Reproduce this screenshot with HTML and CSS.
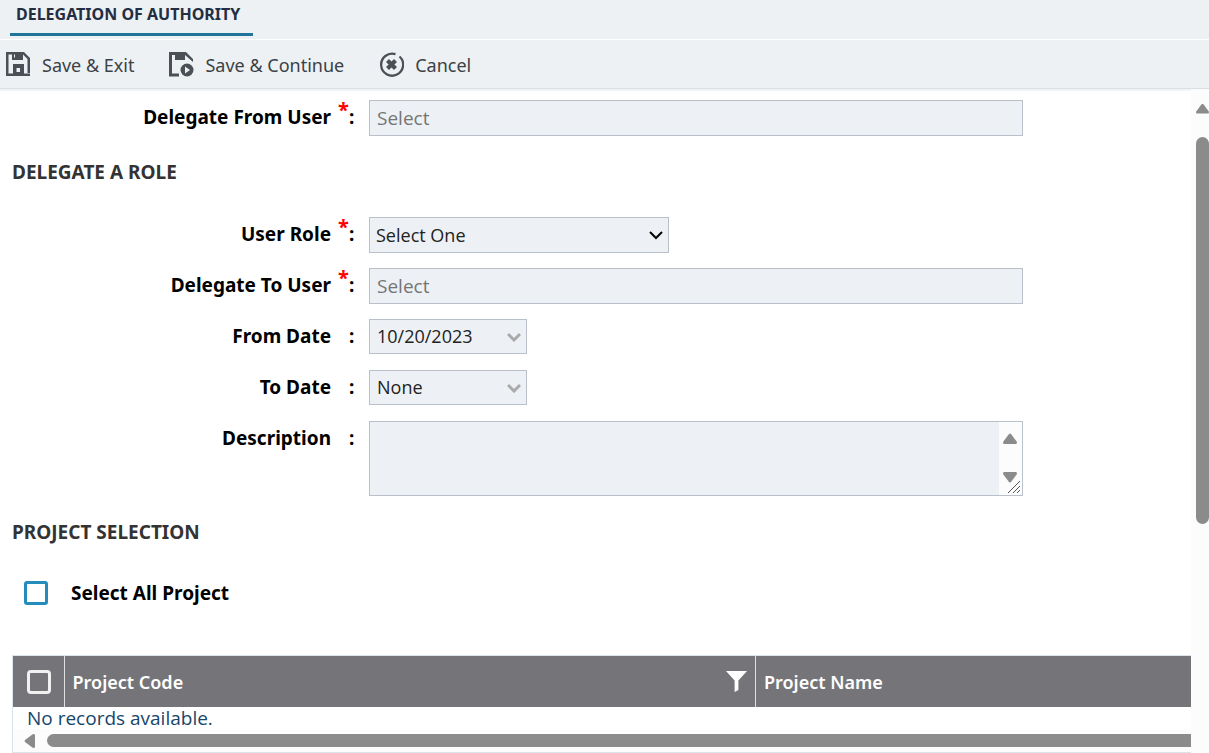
FILE: index.html
```html
<!DOCTYPE html>
<html lang="en">
<head>
<meta charset="utf-8">
<meta name="viewport" content="width=device-width, initial-scale=1">
<title>Delegation of Authority</title>
<link rel="stylesheet" href="styles.css">
</head>
<body>
<header class="page-header"><h1 class="page-title">DELEGATION OF AUTHORITY</h1></header>
<nav class="toolbar" aria-label="Actions">
  <button class="tool" type="button">
    <svg class="tool-icon" viewBox="0 0 25 25" aria-hidden="true"><path fill="#4b5056" d="M0 0H18L24 6V21H21.500V7L17 2.500V8H6V2.500H2.500V21.500H7V12H18V21.500H24V24H0Z"/><path fill="#edf1f4" d="M8 2.500h1v3H8zM10.500 16h3.500v4h-3.500z"/></svg>
    <span>Save &amp; Exit</span>
  </button>
  <button class="tool" type="button">
    <svg class="tool-icon" viewBox="0 0 25 25" aria-hidden="true"><path fill="#4b5056" d="M0 0H17L24 7V10L16 3V8H6V3H3V21.500H10V24.500H0Z"/><circle cx="18" cy="18" r="6.500" fill="#4b5056"/><path d="M16 14.500v7l5-3.500z" fill="#edf1f4"/></svg>
    <span>Save &amp; Continue</span>
  </button>
  <button class="tool" type="button">
    <svg class="tool-icon" viewBox="0 0 25 25" aria-hidden="true"><path d="M16.500 2.200A11 11 0 1 0 20.500 4.500" fill="none" stroke="#4b5056" stroke-width="2.300"/><path d="M8.500 8.500l8 8M16.500 8.500l-8 8" stroke="#4b5056" stroke-width="4.200"/></svg>
    <span>Cancel</span>
  </button>
</nav>
<div class="workspace">
  <main class="content">
    <form class="form">
      <div class="row">
        <label class="label" for="from-user">Delegate From User</label><span class="mark"><span class="star">*</span>:</span>
        <input class="field" id="from-user" type="text" placeholder="Select">
      </div>
      <h2 class="section section-role">DELEGATE A ROLE</h2>
      <div class="row">
        <label class="label" for="role">User Role</label><span class="mark"><span class="star">*</span>:</span>
        <div class="picker picker-role"><select class="field" id="role"><option>Select One</option></select>
        <svg class="chevron" viewBox="0 0 14 10" aria-hidden="true"><path d="M1 2l6 6 6-6"/></svg></div>
      </div>
      <div class="row">
        <label class="label" for="to-user">Delegate To User</label><span class="mark"><span class="star">*</span>:</span>
        <input class="field" id="to-user" type="text" placeholder="Select">
      </div>
      <div class="row">
        <label class="label" for="from-date">From Date</label><span class="mark">:</span>
        <div class="picker picker-date"><select class="field" id="from-date"><option>10/20/2023</option></select>
        <svg class="chevron" viewBox="0 0 14 10" aria-hidden="true"><path d="M1 2l6 6 6-6"/></svg></div>
      </div>
      <div class="row">
        <label class="label" for="to-date">To Date</label><span class="mark">:</span>
        <div class="picker picker-date"><select class="field" id="to-date"><option>None</option></select>
        <svg class="chevron" viewBox="0 0 14 10" aria-hidden="true"><path d="M1 2l6 6 6-6"/></svg></div>
      </div>
      <div class="row">
        <label class="label" for="description">Description</label><span class="mark">:</span>
        <div class="area"><textarea class="field" id="description"></textarea>
          <div class="area-bar" aria-hidden="true">
            <svg class="arrow" viewBox="0 0 14 11"><path d="M6 1q1-1 2 0l6 8q0 2-1 2H1q-1 0-1-2z"/></svg>
            <svg class="arrow" viewBox="0 0 14 11"><path d="M6 10q1 1 2 0l6-8q0-2-1-2H1Q0 0 0 2z"/></svg>
            <svg class="grip" viewBox="0 0 14 14"><path d="M1 13L13 1M6 13l7-7M10 13l3-3"/></svg>
          </div>
        </div>
      </div>
      <h2 class="section section-project">PROJECT SELECTION</h2>
      <div class="check-row"><input class="check" id="all" type="checkbox"><label for="all">Select All Project</label></div>
    </form>
    <div class="grid-panel">
      <table class="grid">
        <colgroup><col class="col-check"><col class="col-code"><col></colgroup>
        <thead><tr>
          <th><input class="check check-light" type="checkbox" aria-label="Select all rows"></th>
          <th><div class="head-cell"><span>Project Code</span><button class="filter" type="button" aria-label="Filter project code"><svg viewBox="0 0 22 22" aria-hidden="true"><path d="M0 0H22L13 10V20L9 22V10Z"/></svg></button></div></th>
          <th>Project Name</th>
        </tr></thead>
        <tbody><tr><td colspan="3">No records available.</td></tr></tbody>
      </table>
      <div class="h-scroll" aria-hidden="true"><svg viewBox="0 0 11 14"><path d="M1 6Q0 7 1 8l8 6q2 0 2-1V1q0-1-2-1z"/></svg><div class="h-thumb"></div></div>
    </div>
  </main>
  <div class="v-scroll" aria-hidden="true"><svg viewBox="0 0 14 11"><path d="M6 1q1-1 2 0l6 8q0 2-1 2H1q-1 0-1-2z"/></svg><div class="v-thumb"></div></div>
</div>
</body>
</html>
```

FILE: styles.css
```css
* { box-sizing: border-box; }
body {
  margin: 0;
  min-height: 100vh;
  overflow: hidden;
  display: flex;
  flex-direction: column;
  background: #fff;
  color: #000;
  font: 18px/24px "Noto Sans", "Open Sans", sans-serif;
}
button, input, select, textarea { font: inherit; margin: 0; }
svg { display: block; }

.page-header {
  display: flex;
  padding: 0 10px 3px;
  background: #edf1f4;
  border-bottom: 1px solid #fff;
}
.page-title {
  margin: 0;
  padding: 2px 13px 7px 6px;
  border-bottom: 3px solid #21759b;
  color: #242e42;
  font-size: 16px;
  font-weight: 700;
  line-height: 24px;
}
.toolbar {
  display: flex;
  gap: 35px;
  padding: 12px 6px 11px;
  background: #edf1f4;
  border-bottom: 1px solid #d9dee2;
  box-shadow: 0 2px 0 #f1f4f6;
}
.tool {
  display: flex;
  align-items: center;
  gap: 11px;
  padding: 0;
  border: 0;
  background: none;
  color: #3c4146;
}
.tool-icon { width: 25px; height: 25px; }

.workspace { flex: 1; display: flex; }
.content { flex: 1; min-width: 0; padding-top: 11px; }
.form { display: flex; flex-direction: column; gap: 15px; }
.row {
  display: grid;
  grid-template-columns: 331fr 38fr 654fr 168fr;
  align-items: start;
}
.label, .mark { padding-top: 5px; font-weight: 700; font-size: 19px; }
.label { text-align: right; }
.mark { position: relative; padding-left: 18px; }
.star {
  position: absolute;
  left: 7px;
  top: -2px;
  color: #f00;
  font-size: 20px;
}
.field {
  display: block;
  width: 100%;
  height: 36px;
  padding: 0 7px;
  border: 1px solid #b9c0ca;
  border-radius: 0;
  background: #edf1f5;
  color: #222;
  font-family: "Open Sans", "Noto Sans", sans-serif;
  appearance: none;
}
.field::placeholder { color: #757575; opacity: 1; font-size: 19px; }
.section { margin: 0; padding-left: 12px; font-size: 19px; font-weight: 700; color: #333; }
.section-role { margin: 9px 0 18px; }
.section-project { margin: 9px 0 22px; }

.picker { display: grid; align-items: center; }
.picker > * { grid-area: 1 / 1; }
.picker-role { width: 300px; }
.picker-role .field { padding: 0 6px; }
.picker-date { width: 158px; }
.picker-date .field { height: 35px; padding-bottom: 2px; }
.picker-date .chevron { stroke: #aaa; stroke-width: 3; }
.picker-date { margin-bottom: 1px; }
.chevron {
  justify-self: end;
  width: 14px;
  height: 10px;
  margin-right: 6px;
  fill: none;
  stroke: #000;
  stroke-width: 2;
  pointer-events: none;
}
.area { position: relative; }
.area .field { height: 75px; resize: none; }
.area-bar {
  position: absolute;
  top: 1px;
  right: 1px;
  bottom: 1px;
  width: 23px;
  padding: 11px 0 0 4px;
  background: #fcfcfc;
  fill: #8b8b8b;
}
.arrow { width: 14px; height: 11px; margin-bottom: 28px; }
.grip {
  position: absolute;
  right: 1px;
  bottom: 1px;
  width: 14px;
  height: 14px;
  stroke: #555;
}

.check-row {
  display: flex;
  align-items: center;
  gap: 23px;
  padding-left: 24px;
  font-size: 19px;
  font-weight: 700;
}
.check {
  appearance: none;
  display: block;
  width: 24px;
  height: 24px;
  border: 3px solid #258dbb;
  border-radius: 3px;
  background: #fff;
}
.check-light { border-color: #f1f1f1; background: transparent; border-radius: 4px; }

.grid-panel {
  margin: 50px 0 0 12px;
  border: solid #dce3ec;
  border-width: 1px 0 1px 1px;
}
.grid { width: 100%; border-collapse: collapse; table-layout: fixed; }
.col-check { width: 51px; }
.col-code { width: 58.7%; }
.grid th {
  height: 51px;
  padding: 0 8px;
  background: #747479;
  color: #fff;
  text-align: left;
  font-weight: 600;
}
.grid th + th { border-left: 1px solid #dfdfe2; }
.grid th:first-child { padding-left: 14px; }
.head-cell { display: flex; justify-content: space-between; align-items: center; }
.filter { width: 21px; height: 21px; padding: 0; border: 0; background: none; fill: #fff; }
.grid td {
  height: 22px;
  padding: 0 14px;
  color: #17466a;
  font-family: "Open Sans", "Noto Sans", sans-serif;
  font-size: 19px;
  line-height: 22px;
}
.h-scroll {
  display: flex;
  align-items: center;
  gap: 12px;
  height: 23px;
  padding-left: 11px;
  background: #fcfcfc;
  fill: #8b8b8b;
}
.h-scroll svg { width: 11px; height: 14px; }
.h-thumb { flex: 1; height: 13px; border-radius: 7px 0 0 7px; background: #8b8b8b; }
.v-scroll {
  width: 18px;
  padding: 14px 0 0 5px;
  background: #fcfcfc;
  fill: #8b8b8b;
}
.v-scroll svg { width: 13px; height: 11px; }
.v-thumb { height: 387px; margin-top: 23px; border-radius: 7px; background: #8b8b8b; }
```
